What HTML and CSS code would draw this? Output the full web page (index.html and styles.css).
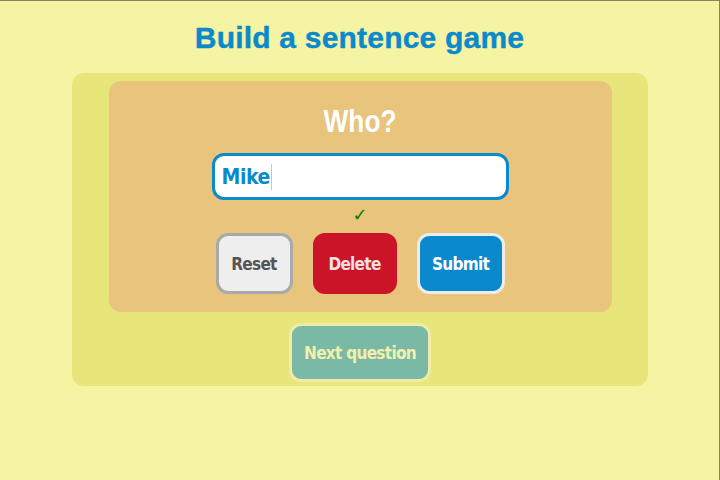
FILE: index.html
```html
<!DOCTYPE html>
<html>
<head>
<meta charset="utf-8">
<link rel="stylesheet" href="styles.css">
</head>
<body>
<div class="frame">
  <h1 class="title">Build a sentence game</h1>
  <div class="outer">
    <div class="inner">
      <div class="question">Who?</div>
      <div class="answer"><span class="typed">Mike</span><span class="caret"></span></div>
      <div class="check">✓</div>
      <div class="buttons">
        <button class="btn reset">Reset</button>
        <button class="btn delete">Delete</button>
        <button class="btn submit">Submit</button>
      </div>
    </div>
    <button class="btn next">Next question</button>
  </div>
</div>
</body>
</html>
```
FILE: styles.css
```css
html, body {
  margin: 0;
  padding: 0;
  width: 720px;
  height: 480px;
  overflow: hidden;
}
.frame {
  box-sizing: border-box;
  width: 720px;
  height: 480px;
  background: #f5f4a2;
  border-top: 1px solid #85856a;
  border-right: 1px solid #85856a;
  display: flex;
  flex-direction: column;
  align-items: center;
}
.title {
  margin: 19px 0 0 0;
  font-family: "Liberation Sans", Arial, sans-serif;
  font-weight: bold;
  font-size: 30px;
  line-height: 36px;
  color: #0a89cc;
  letter-spacing: 0.2px;
  -webkit-text-stroke: 0.4px #0a89cc;
}
.outer {
  margin-top: 17px;
  margin-left: 1px;
  width: 576px;
  height: 313px;
  box-sizing: border-box;
  background: #e8e67b;
  border-radius: 12px;
  padding-top: 8px;
  display: flex;
  flex-direction: column;
  align-items: center;
}
.inner {
  width: 503px;
  height: 231px;
  box-sizing: border-box;
  background: #e8c47d;
  border-radius: 12px;
  display: flex;
  flex-direction: column;
  align-items: center;
  padding-top: 23px;
}
.question {
  font-family: "Liberation Sans", Arial, sans-serif;
  font-weight: bold;
  font-size: 31px;
  line-height: 36px;
  color: #ffffff;
  transform: scaleX(0.85);
}
.answer {
  margin-top: 13px;
  width: 297px;
  height: 47px;
  box-sizing: border-box;
  background: #fff;
  border: 3px solid #0a89cc;
  border-radius: 12px;
  display: flex;
  align-items: center;
  padding-left: 7px;
}
.typed {
  font-family: "DejaVu Sans Condensed", "DejaVu Sans", sans-serif;
  font-weight: bold;
  font-size: 21px;
  letter-spacing: -0.4px;
  color: #0a89cc;
}
.caret {
  width: 1px;
  height: 26px;
  background: #aad0e8;
  margin-left: 1px;
}
.check {
  margin-top: 5px;
  font-family: "DejaVu Sans", sans-serif;
  font-size: 18px;
  line-height: 19px;
  color: #0a7a0a;
}
.buttons {
  margin-top: 9px;
  display: flex;
  gap: 20px;
}
.btn {
  box-sizing: border-box;
  height: 61px;
  border-radius: 12px;
  font-family: "DejaVu Sans Condensed", "DejaVu Sans", sans-serif;
  font-weight: bold;
  font-size: 17px;
  letter-spacing: -0.7px;
  padding: 0;
  border: 3px solid transparent;
}
.reset {
  width: 77px;
  background: #eeeeee;
  border-color: #a9a9a9;
  color: #555555;
}
.delete {
  width: 84px;
  background: #cc1428;
  border-color: #cc1428;
  color: #f3e0e0;
}
.submit {
  width: 88px;
  background: #0a89cc;
  border-color: #ececec;
  color: #ffffff;
}
.next {
  margin-top: 11px;
  width: 142px;
  height: 59px;
  background: #7ab9a5;
  border-color: #eeeca6;
  color: #f4f0ac;
}
```
